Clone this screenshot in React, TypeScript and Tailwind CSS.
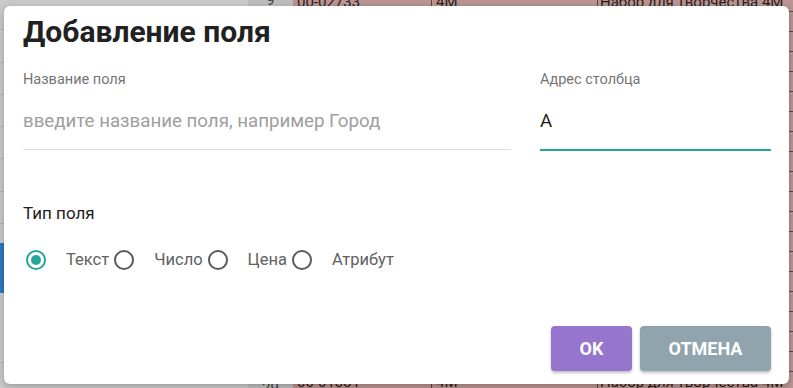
import React, { useState } from "react";

const FONT = { fontFamily: "Roboto, 'Noto Sans', sans-serif" };

const TYPES = ["Текст", "Число", "Цена", "Атрибут"];

const Radio: React.FC<{ checked: boolean }> = ({ checked }) => (
    <span
        className={
            checked
                ? "flex h-[20px] w-[20px] shrink-0 items-center justify-center rounded-full border-[2.5px] border-[#26a69a]"
                : "flex h-[20px] w-[20px] shrink-0 items-center justify-center rounded-full border-[2.5px] border-[#5a5a5a]"
        }
    >
        {checked && <span className="h-[10px] w-[10px] rounded-full bg-[#26a69a]" />}
    </span>
);

const Background: React.FC = () => {
    const rows = Array.from({ length: 20 }, (_, i) => i);
    return (
        <div className="absolute inset-0 flex overflow-hidden">
            {/* left panel */}
            <div className="flex w-[248px] flex-col bg-[#c9c9c9]">
                <div className="h-[30px] border-b border-[#b5b5b5]" />
                <div className="h-[33px] border-b border-[#b5b5b5]" />
                <div className="h-[32px] border-b border-[#b5b5b5]" />
                <div className="h-[32px] border-b border-[#b5b5b5]" />
                <div className="h-[32px] border-b border-[#b5b5b5]" />
                <div className="h-[33px] border-b border-[#b5b5b5]" />
                <div className="h-[32px] border-b border-[#b5b5b5]" />
                <div className="h-[19px]" />
                <div className="h-[50px] bg-[#2f78bf]" />
                <div className="h-[70px] border-b border-[#b5b5b5]" />
            </div>
            {/* row numbers */}
            <div className="flex w-[45px] flex-col bg-[#bdbdbd] text-[#444]">
                <div className="-mt-[10px] h-[20px] text-center text-[15px] leading-[20px]">9</div>
                <div className="flex-1" />
                <div className="mb-[-10px] h-[20px] text-center text-[15px] leading-[20px]">29</div>
            </div>
            {/* cells */}
            <div className="relative flex flex-1 flex-col bg-[#b99491] text-[15px] text-[#2b1d1c]">
                {rows.map((r) => (
                    <div
                        key={r}
                        className="flex h-[20px] shrink-0 border-b border-[#5b4645] leading-[20px] first:-mt-[8px]"
                    >
                        <div className="w-[139px] border-r border-[#5b4645] pl-[4px]">
                            {r === 0 ? "00-02733" : r === 19 ? "00-01331" : ""}
                        </div>
                        <div className="w-[166px] border-r border-[#5b4645] pl-[4px]">
                            {r === 0 || r === 19 ? "4M" : ""}
                        </div>
                        <div className="flex-1 overflow-hidden whitespace-nowrap pl-[2px]">
                            {r === 0 || r === 19 ? "Набор для творчества 4M" : "Набор"}
                        </div>
                    </div>
                ))}
            </div>
        </div>
    );
};

export default function App() {
    const [type, setType] = useState("Текст");

    return (
        <div className="relative h-[388px] w-[793px] overflow-hidden" style={FONT}>
            <Background />

            {/* Dialog */}
            <div className="absolute left-[4px] top-[6px] flex h-[378px] w-[785px] flex-col rounded-[6px] bg-white pl-[19px] pr-[18px] shadow-[0_2px_6px_rgba(0,0,0,0.25)]">
                <h2 className="mt-[8px] text-[30px] font-bold leading-[36px] text-[#212121]">
                    Добавление поля
                </h2>

                <div className="mt-[22px] flex gap-[29px]">
                    <div className="w-[488px]">
                        <div className="text-[14.5px] leading-[16px] text-[#757575]">Название поля</div>
                        <div className="mt-[17px] flex h-[45px] items-center border-b border-[#dcdcdc] pb-[12px] text-[18.7px] text-[#9e9e9e]">
                            введите название поля, например Город
                        </div>
                    </div>
                    <div className="flex-1">
                        <div className="text-[14.5px] leading-[16px] text-[#757575]">Адрес столбца</div>
                        <div className="mt-[17px] flex h-[46px] items-center border-b-2 border-[#26a69a] pb-[12px] text-[18.7px] text-[#212121]">
                            A
                        </div>
                    </div>
                </div>

                <div className="mt-[52px] text-[17px] leading-[20px] text-[#212121]">Тип поля</div>

                <div className="mt-[25px] flex items-center pl-[3px]">
                    {TYPES.map((t) => (
                        <label
                            key={t}
                            onClick={() => setType(t)}
                            className="flex cursor-pointer items-center text-[16.5px] text-[#616161]"
                        >
                            <Radio checked={type === t} />
                            <span className="ml-[20px] mr-[5px]">{t}</span>
                        </label>
                    ))}
                </div>

                <div className="mt-auto mb-[13px] flex justify-end gap-[8px]">
                    <button className="h-[45px] w-[81px] rounded-[4px] bg-[#9575cd] text-[18px] font-bold text-white shadow-[0_2px_3px_rgba(0,0,0,0.25)]">
                        OK
                    </button>
                    <button className="h-[45px] w-[131px] rounded-[4px] bg-[#90a4ae] text-[18px] font-bold text-white shadow-[0_2px_3px_rgba(0,0,0,0.25)]">
                        ОТМЕНА
                    </button>
                </div>
            </div>
        </div>
    );
}
